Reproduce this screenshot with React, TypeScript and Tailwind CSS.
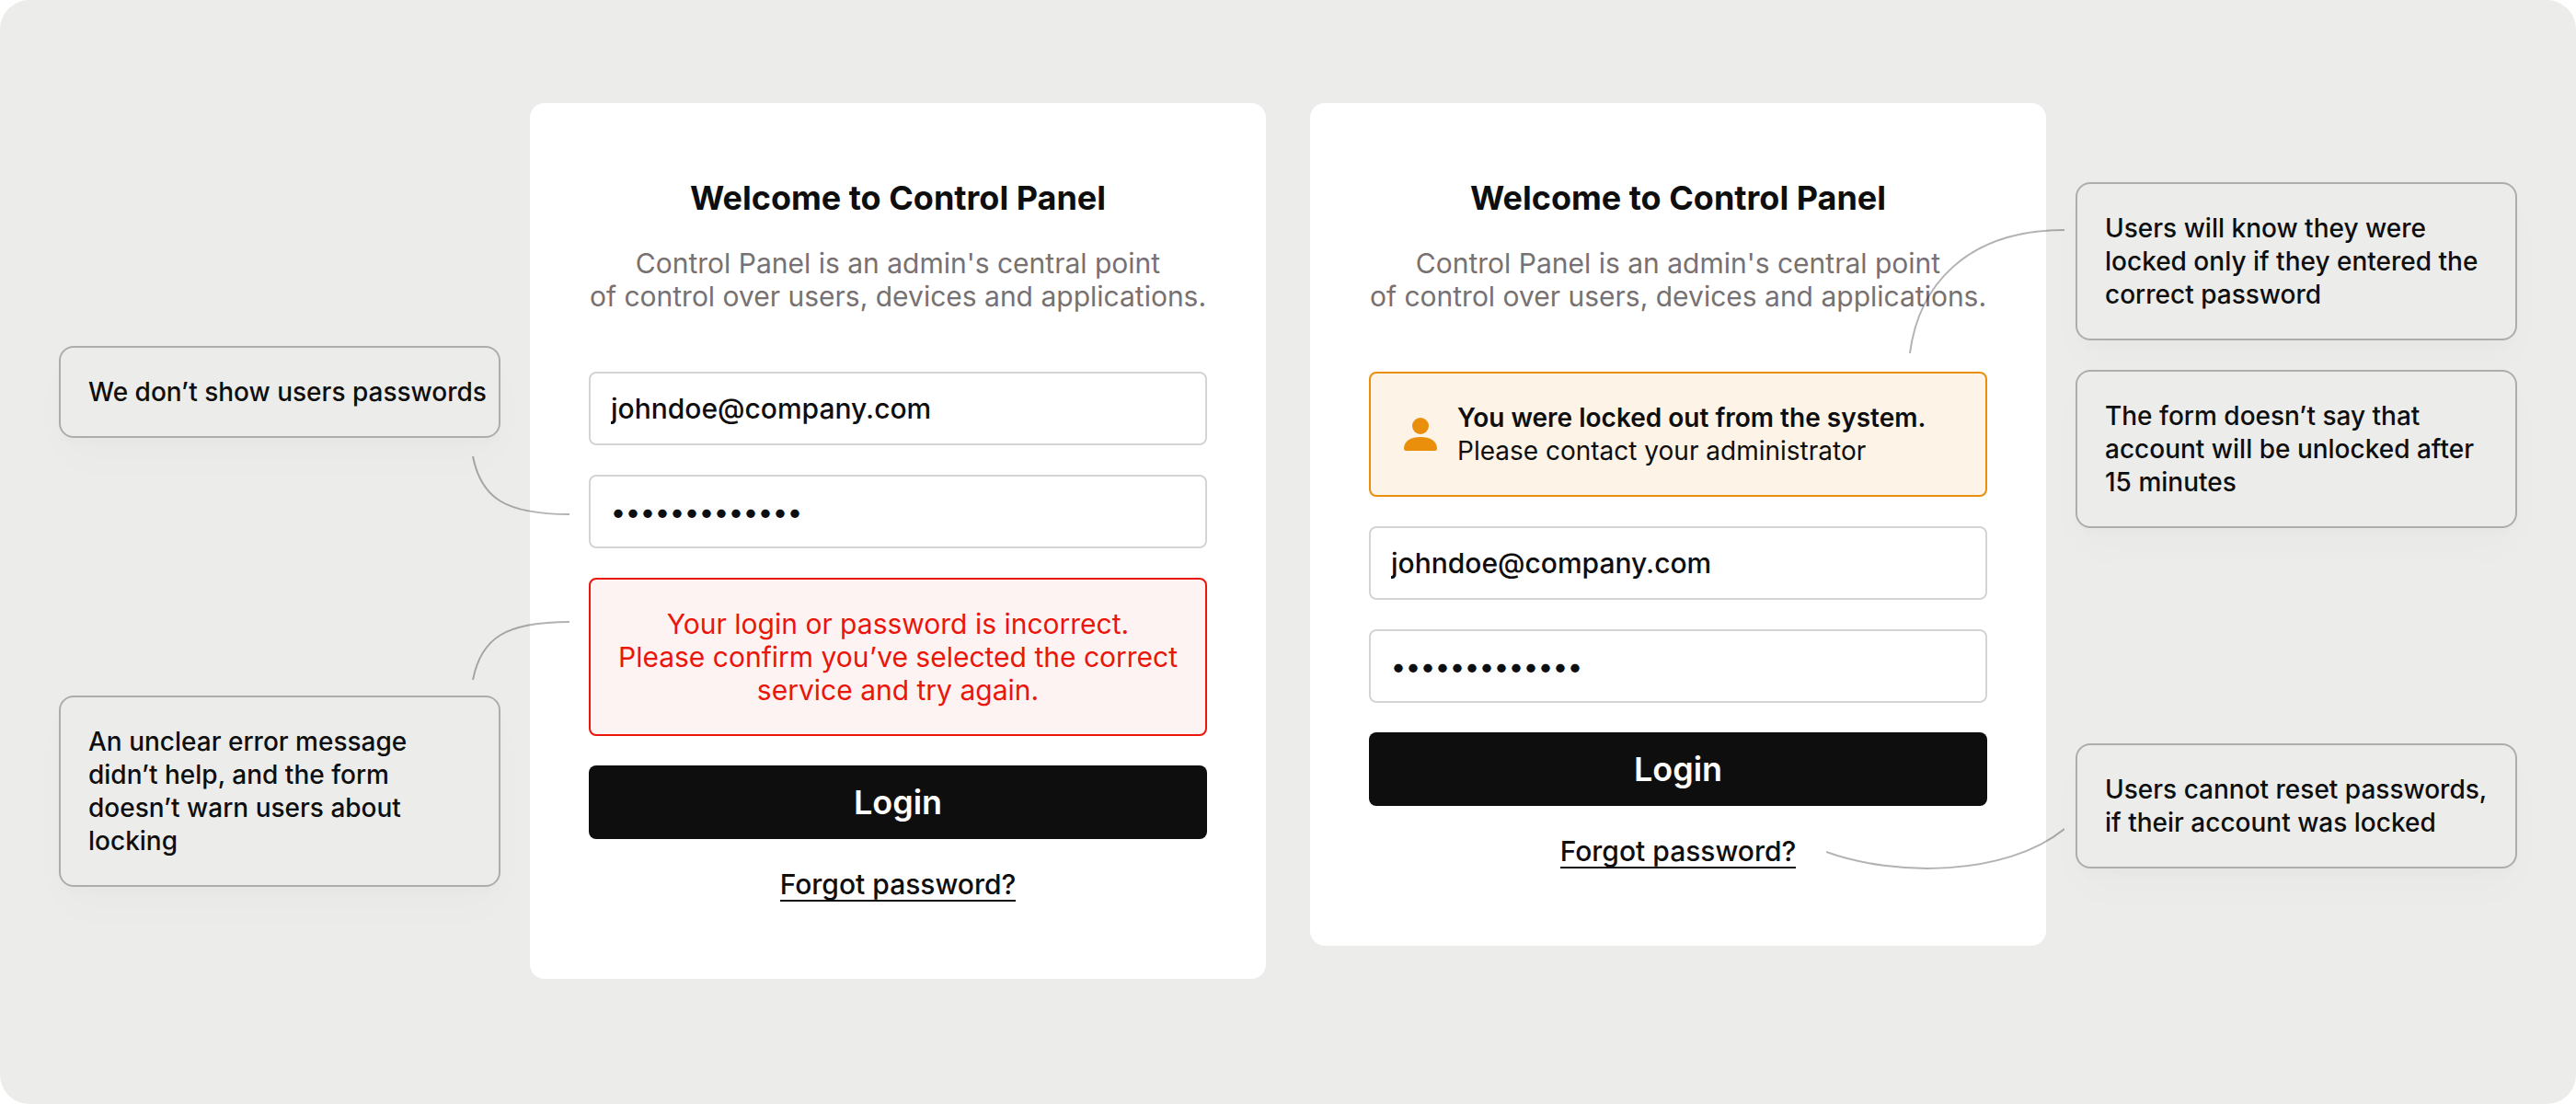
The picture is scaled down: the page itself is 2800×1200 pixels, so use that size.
import React from "react";

type ConnectorProps = { className: string; width: number; height: number; d: string };

/** Thin curve that ties a note to the part of the form it describes. */
function Connector({ className, width, height, d }: ConnectorProps) {
  return (
    <svg
      aria-hidden="true"
      className={`pointer-events-none absolute z-10 max-w-none text-black/30 ${className}`}
      width={width}
      height={height}
      viewBox={`0 0 ${width} ${height}`}
      fill="none"
      stroke="currentColor"
      strokeWidth={2}
    >
      <path d={d} />
    </svg>
  );
}

function Note({ children, connector }: { children: React.ReactNode; connector?: React.ReactNode }) {
  return (
    <div className="relative rounded-2xl border-2 border-[#adadab] p-[30px] text-[28px] leading-9 font-medium shadow-[0_8px_12px_rgba(0,0,0,0.01),0_24px_48px_rgba(0,0,0,0.015)]">
      <p>{children}</p>
      {connector}
    </div>
  );
}

function Field({ label, type, value }: { label: string; type: string; value: string }) {
  return (
    <input
      aria-label={label}
      type={type}
      defaultValue={value}
      className="block h-20 w-full rounded-lg border-2 border-[#d4d4d4] bg-white px-[22px] text-[30px] font-medium outline-none"
    />
  );
}

function PersonIcon() {
  return (
    <svg aria-hidden="true" className="size-12 shrink-0" viewBox="0 0 48 48" fill="#ea8f0c">
      <circle cx="24" cy="15" r="9" />
      <path d="M6 39.5C6 31.5 13.5 27 24 27s18 4.500 18 12.500c0 1.600-.9 2.500-2.500 2.500h-31C6.900 42 6 41.100 6 39.500Z" />
    </svg>
  );
}

function LoginCard({ notice, error }: { notice?: React.ReactNode; error?: React.ReactNode }) {
  return (
    <form
      className="min-w-0 rounded-2xl bg-white px-16 pt-20 pb-[84px]"
      onSubmit={(event) => event.preventDefault()}
    >
      <h2 className="text-center text-[36px] leading-[46px] font-bold">
        Welcome to Control Panel
      </h2>
      <p className="mt-[30px] text-center text-[30px] leading-9 whitespace-nowrap text-[#777172]">
        Control Panel is an admin's central point
        <br />
        of control over users, devices and applications.
      </p>
      <div className="mt-16 flex flex-col gap-8">
        {notice}
        <Field label="Email" type="email" value="johndoe@company.com" />
        <Field label="Password" type="password" value="controlpanel1" />
        {error}
        <button
          type="submit"
          className="h-20 rounded-lg bg-[#0e0e0e] text-[36px] leading-[46px] font-semibold text-white"
        >
          Login
        </button>
        <a
          href="#"
          className="self-center border-b-2 border-[#0e0e0e] text-[30px] leading-[34px] font-medium"
        >
          Forgot password?
        </a>
      </div>
    </form>
  );
}

export default function App() {
  return (
    <main
      className={
        "grid min-h-screen grid-cols-2 items-start gap-12 rounded-[32px] bg-[#ececea] px-16 py-28 " +
        "text-[#0e0e0e] [font-family:Inter,'Liberation_Sans',sans-serif]"
      }
    >
      <section className="grid grid-cols-[3fr_5fr] items-start gap-8">
        <aside className="flex min-w-0 flex-col gap-[280px] pt-[264px]">
          <Note
            connector={
              <Connector
                className="top-[117px] -right-[77px]"
                width={106}
                height={68}
                d="M1 1C10 47 37 64 106 64"
              />
            }
          >
            <span className="whitespace-nowrap">We don’t show users passwords</span>
          </Note>
          <Note
            connector={
              <Connector
                className="-top-[86px] -right-[77px]"
                width={106}
                height={68}
                d="M1 67C10 21 37 4 106 4"
              />
            }
          >
            An unclear error message didn’t help, and the form doesn’t warn users about locking
          </Note>
        </aside>
        <LoginCard
          error={
            <p
              role="alert"
              className="rounded-lg border-2 border-[#ea150b] bg-[#fdf3f2] py-[30px] text-center text-[30px] leading-9 whitespace-nowrap text-[#ea150b]"
            >
              Your login or password is incorrect.{" "}
              <br />
              Please confirm you’ve selected the correct
              <br />
              service and try again.
            </p>
          }
        />
      </section>

      <section className="grid grid-cols-[5fr_3fr] items-start gap-8">
        <LoginCard
          notice={
            <div
              role="alert"
              className="flex items-center gap-4 rounded-lg border-2 border-[#ea8f0c] bg-[#fdf3e6] p-[30px] text-[28px] leading-9 whitespace-nowrap"
            >
              <PersonIcon />
              <p>
                <strong className="font-semibold">You were locked out from the system.</strong>
                <br />
                Please contact your administrator
              </p>
            </div>
          }
        />
        <aside className="flex min-w-0 flex-col gap-8 pt-[86px]">
          <Note
            connector={
              <Connector
                className="top-[48px] -left-[183px]"
                width={169}
                height={136}
                d="M1 136C10 65 60 2 169 2"
              />
            }
          >
            Users will know they were locked only if they entered the correct password
          </Note>
          <Note>The form doesn’t say that account will be unlocked after 15 minutes</Note>
          <div className="pt-[202px]">
            <Note
              connector={
                <Connector
                  className="top-[90px] -left-[273px]"
                  width={259}
                  height={48}
                  d="M0 26C74 53 195 53 259 1"
                />
              }
            >
              Users cannot reset passwords, if their account was locked
            </Note>
          </div>
        </aside>
      </section>
    </main>
  );
}
